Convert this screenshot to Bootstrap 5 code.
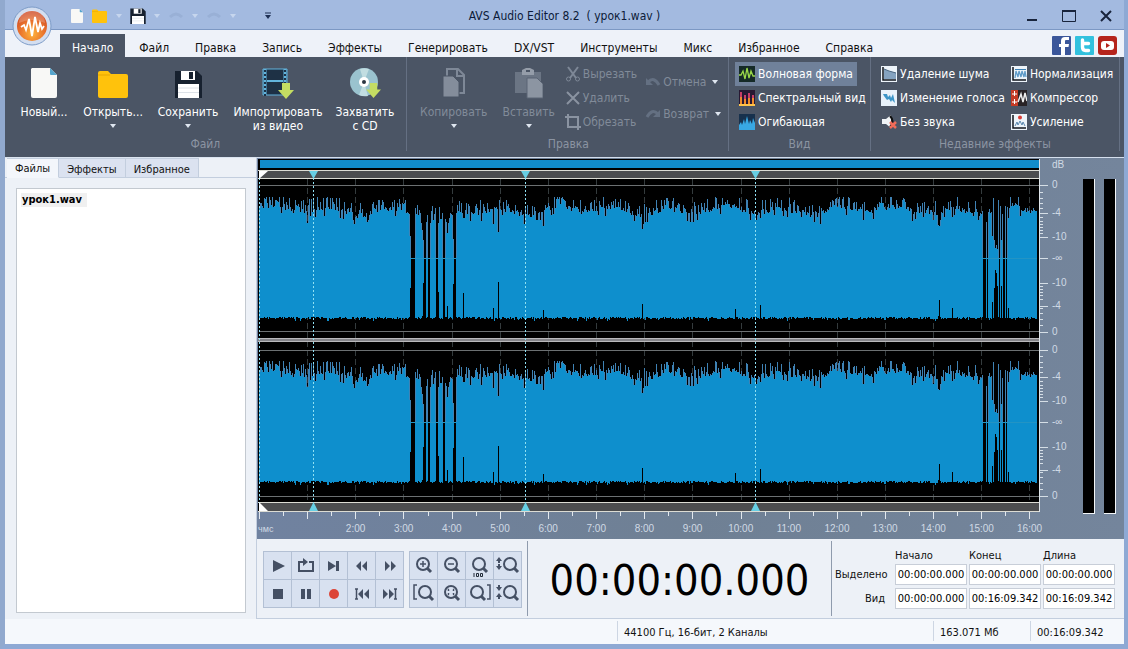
<!DOCTYPE html>
<html lang="ru">
<head>
<meta charset="utf-8">
<meta name="viewport" content="width=device-width, initial-scale=1">
<title>AVS Audio Editor 8.2 ( урок1.wav )</title>
<link href="https://cdn.jsdelivr.net/npm/bootstrap@5.3.0/dist/css/bootstrap.min.css" rel="stylesheet">
<style>
:root{--ui:"DejaVu Sans Condensed","Noto Sans",sans-serif;--ribbon:#4b5565;--frame:#a3bae0;--panel:#edf1f7;--line:#c3cede}
body{font-family:var(--ui);font-size:12px;line-height:14px;color:#111;background:var(--frame)}
button{font-family:inherit;color:inherit;background:none;border:0;padding:0}
svg{display:block;flex:none}
.app-window{min-height:100vh;border:solid #8ea9d4;border-width:0 4px 5px 5px;border-left-color:#91a9ce;background:var(--panel)}
.title-bar{height:30px;background:var(--frame);border-bottom:1px solid #7c98c4;padding:2px 8px 0;color:#0c1a38}
.title-bar .side{flex:1 1 0}
.orb{position:absolute;left:7px;top:6px}
.quick{gap:4px}
.quick button:first-child{margin-left:58px}
.menu-tabs{height:27px;padding:4px 7px 0 55px;background:#eef2f9}
.menu-tabs .nav-link{padding:7px 13px 0;height:23px;color:#111;border-radius:0;line-height:14px}
.menu-tabs .nav-link.active{background:var(--ribbon);color:#fff;padding:7px 12px 0;margin-right:1px}
.social{width:19px;height:19px;margin-top:2px}
.ribbon{height:100px;background:var(--ribbon);color:#fff}
.ribbon-group{border-right:1px solid #657083;margin-bottom:6px;flex:none}
.g-file{width:35.9%;padding-left:6px}.g-edit{width:28.8%;padding-left:8px}.g-view{width:12.7%;padding-left:6px}.g-fx{width:22.2%;padding-left:6px}
.group-name{color:#8b94a2;text-align:center;height:14px;padding-right:6px}
.group-body{height:80px;padding-top:5px}
.big-btn{height:75px;display:flex;flex-direction:column;align-items:center;line-height:14px;padding-top:5px}
.big-btn svg.pic{margin-bottom:6px}
.w-a{width:66px}.w-b{width:72px}.w-c{width:78px}.w-d{width:102px}
.off{color:#818b99}
.mini{height:24px;display:flex;align-items:center;gap:3px;white-space:nowrap;padding:0 4px}
.g-edit .mini{gap:2px}
.g-fx .mini{padding-right:2px}
.mini.on{background:#70819a}
.arrow-down{width:0;height:0;border:3px solid transparent;border-top:4px solid #dfe6f0;border-bottom:0}
.big-btn .arrow-down{margin-top:5px}
.quick .arrow-down{border-top-color:#c6d6ee}
.side-panel{width:252px;border-right:1px solid var(--line);background:var(--panel);border-top:1px solid #dbe4f0}
.side-tabs .nav-link{height:20px;padding:4px 8px 0;color:#111;border-radius:0;background:#dbe2f0;border:1px solid var(--line);border-left:0;line-height:14px;font-size:11px}
.side-tabs .nav-link.active{background:#f3f6fb;border-bottom-color:#f3f6fb;padding-top:3px}
.side-tabs{border-bottom:1px solid var(--line);padding-left:2px;height:20px}
.file-list{margin:10px 10px 6px 11px;background:#fff;border:1px solid #c3c9d0;padding:3px 4px}
.file-list a{display:inline-block;background:#f0f0f0;padding:0 5px 0 1px;font-weight:700;color:#000;text-decoration:none;font-size:11px;line-height:14px}
.stage{background:linear-gradient(90deg,#7082a0,#6f8094 50%,#74859c);border-top:1px solid #d5dfed;display:grid;grid-template-columns:minmax(0,1fr) 38px 46px;grid-template-rows:minmax(0,1fr) 27px;padding-left:1px}
.wave{width:100%;height:100%}
.wave-box{height:354px;min-height:100%}
.db-scale{display:grid;grid-template-columns:10px 1fr}
.db-scale ul,.clock-axis ul{list-style:none;margin:0;padding:0}
.db-scale li{display:flex;align-items:flex-end;line-height:0;height:0;min-height:0;padding-left:2px}
.axis-text{font-family:"Liberation Sans",sans-serif;font-size:10px;color:#d0dae5}
.meters{grid-column:3;grid-row:1/3;padding:21px 8px 25px 0;display:flex;gap:9px;justify-content:flex-end}
.meters div{width:12px;background:#000;border-right:1px solid #f3f6f8;border-bottom:1px solid #f3f6f8}
.clock-axis{grid-column:1}
.clock-axis .labels{display:flex;white-space:nowrap}
.clock-axis li{flex:0 0 6.157%;text-align:center;display:flex;justify-content:center}
.clock-axis li:first-child{flex-basis:9.4%;justify-content:flex-start;font-size:9px}
.bottom-panel{height:80px;background:var(--panel);border-bottom:1px solid var(--line)}
.tool-grid{display:grid;grid-auto-rows:28px;border:solid #b3c0d4;border-width:1px 0 0 1px;height:57px;margin-top:12px}
.tool-grid button{border:solid #b3c0d4;border-width:0 1px 1px 0;background:#d8e1f0;display:flex;align-items:center;justify-content:center}
.transport{grid-template-columns:repeat(5,28px);margin-left:6px}
.zooms{grid-template-columns:repeat(4,28px);margin:12px 5px 0}
.counter{flex:1 1 0;border:solid #8f9bad;border-width:0 1px;margin:2px 0 2px;font-size:43px;line-height:52px;padding-top:13px;text-align:center;color:#000}
.times{width:292px;padding:10px 9px 0 0;display:grid;grid-template-columns:58px 72px 72px 72px;column-gap:2px;row-gap:3px;justify-content:end;align-content:start;white-space:nowrap;font-size:11px}
.times span{height:12px}
.times .form-control{height:21px;padding:0;border-radius:0;border:1px solid #c8ced8;text-align:center;font:11px/14px var(--ui);color:#000;background:#fff}
.times label{text-align:right;padding:0 8px 0 0;align-self:center}
.status{height:25px;background:#f5f8fc;padding-right:2px;font-size:11px}
.status div{padding:5px 0 0 6px;border-left:1px solid #cdd6e3;height:20px;margin-top:2px;line-height:14px}
.status div:first-child{border:0;flex:1 1 0}
.s-format{width:316px}.s-size{width:97px}.s-length{width:92px}
</style>
</head>
<body>
<svg width="0" height="0" class="position-absolute" aria-hidden="true">
<defs>
<symbol id="floppy" viewBox="0 0 27 28"><path d="M0 1h22l5 5v22H0z" fill="#17212f"/><path d="M6 1h14v9H6z" fill="#fff"/><path d="M14 2h4v7h-4z" fill="#17212f"/><path d="M3 14h21v14H3z" fill="#fff"/><path d="M3 18h21M3 22.500h21" stroke="#dde2e8"/></symbol>
<symbol id="folder" viewBox="0 0 30 28"><path d="M0 3q0-2 2-2h8l3 3h15q2 0 2 2v20q0 2-2 2H2q-2 0-2-2z" fill="#ffc20c"/><path d="M0 5h12" stroke="#e6a700"/></symbol>
<symbol id="page" viewBox="0 0 26 30"><path d="M1 0h18l7 7v21q0 2-2 2H2q-2 0-2-2V1z" fill="#f8f8f6"/><path d="M19 0l7 7h-6q-1 0-1-1z" fill="#55a5cd"/></symbol>
<symbol id="lens" viewBox="0 0 20 20"><circle cx="9" cy="8" r="6" fill="none" stroke="#455064" stroke-width="2"/><path d="M13 12l4 4" stroke="#455064" stroke-width="3"/></symbol>
<symbol id="arrow-green" viewBox="0 0 16 16"><path d="M4 0h8v7h4l-8 9-8-9h4z" fill="#c4dd62"/></symbol>
</defs></svg>

<div class="app-window d-flex flex-column position-relative">
<header class="title-bar d-flex align-items-center">
  <svg class="orb" width="40" height="40" viewBox="0 0 40 40"><defs><radialGradient id="og" cx=".5" cy=".75" r=".7"><stop offset="0" stop-color="#ffb43c"/><stop offset=".6" stop-color="#e8702c"/><stop offset="1" stop-color="#cf4a22"/></radialGradient></defs><circle cx="20" cy="20" r="19" fill="#d3def0" stroke="#7d9cc8"/><circle cx="20" cy="20" r="15" fill="url(#og)"/><path d="M7 17a13 13 0 0 1 26 0q-13-6-26 0" fill="#fff" opacity=".22"/><path d="M9 21l3-2 2 5 3-11 3 17 3-19 3 15 2-9 2 6 2-3" fill="none" stroke="#fff" stroke-width="1.800"/></svg>
  <div class="side quick d-flex align-items-center">
    <button aria-label="Новый"><svg width="12" height="14"><use href="#page"/></svg></button>
    <button aria-label="Открыть" class="ms-1"><svg width="17" height="14" viewBox="0 0 17 14"><use href="#folder" width="17" height="14"/></svg></button><span class="arrow-down ms-1"></span>
    <button aria-label="Сохранить" class="ms-1"><svg width="16" height="16"><use href="#floppy"/></svg></button><span class="arrow-down ms-1"></span>
    <button aria-label="Отмена" class="ms-1"><svg width="16" height="12" viewBox="0 0 16 12"><path d="M2 7q6-6 12 0" fill="none" stroke="#99b0d6" stroke-width="3"/></svg></button><span class="arrow-down ms-1"></span>
    <button aria-label="Возврат" class="ms-1"><svg width="16" height="12" viewBox="0 0 16 12"><path d="M2 7q6-6 12 0" fill="none" stroke="#99b0d6" stroke-width="3"/></svg></button><span class="arrow-down ms-1"></span>
    <button aria-label="Настроить панель" class="ms-4"><svg width="8" height="8" viewBox="0 0 8 8"><path d="M1 1h6" stroke="#1f3155"/><path d="M1 3h6L4 7z" fill="#1f3155"/></svg></button>
  </div>
  <div>AVS Audio Editor 8.2&nbsp; ( урок1.wav )</div>
  <div class="side d-flex justify-content-end align-items-center gap-4">
    <button aria-label="Свернуть"><svg width="12" height="14" viewBox="0 0 12 14"><path d="M1 11h10" stroke="#18243c" stroke-width="2"/></svg></button>
    <button aria-label="Развернуть"><svg width="14" height="14" viewBox="0 0 14 14"><path d="M.5 1.500h13v11H.5z" fill="none" stroke="#18243c"/><path d="M0 2h14" stroke="#18243c" stroke-width="2"/></svg></button>
    <button aria-label="Закрыть" class="me-1"><svg width="12" height="12" viewBox="0 0 12 12"><path d="M1 1l10 10M11 1L1 11" stroke="#18243c" stroke-width="2"/></svg></button>
  </div>
</header>

<nav class="menu-tabs d-flex">
  <div class="nav flex-nowrap">
  <a class="nav-link active" href="#">Начало</a><a class="nav-link" href="#">Файл</a><a class="nav-link" href="#">Правка</a><a class="nav-link" href="#">Запись</a><a class="nav-link" href="#">Эффекты</a><a class="nav-link" href="#">Генерировать</a><a class="nav-link" href="#">DX/VST</a><a class="nav-link" href="#">Инструменты</a><a class="nav-link" href="#">Микс</a><a class="nav-link" href="#">Избранное</a><a class="nav-link" href="#">Справка</a>
  </div>
  <div class="ms-auto d-flex gap-1">
    <a href="#" aria-label="Facebook"><svg class="social" viewBox="0 0 19 19"><rect width="19" height="19" rx="1" fill="#3a569a"/><path d="M17 4h-3q-1 0-1 1v3h4l-.5 3H13v8h-4v-8H7V8h2V5q0-4 4-4h4z" fill="#fff"/></svg></a>
    <a href="#" aria-label="Twitter"><svg class="social" viewBox="0 0 19 19"><rect width="19" height="19" rx="1" fill="#32c1de"/><path d="M7.500 4v7q0 3.500 3 3.500h3M7.500 7.500h6" fill="none" stroke="#fff" stroke-width="3.400" stroke-linecap="round"/></svg></a>
    <a href="#" aria-label="YouTube"><svg class="social" viewBox="0 0 19 19"><rect width="19" height="19" rx="3" fill="#b5241c"/><rect x="3" y="5" width="13" height="9" rx="3" fill="#fff"/><path d="M8 7l4 2.500L8 12z" fill="#b5241c"/></svg></a>
  </div>
</nav>

<div class="ribbon d-flex">
  <section class="ribbon-group g-file">
    <div class="group-body d-flex">
      <button class="big-btn w-a"><svg class="pic" width="26" height="32" viewBox="0 0 26 32"><use href="#page" y="1" width="26" height="30"/></svg>Новый...</button>
      <button class="big-btn w-b"><svg class="pic" width="30" height="32" viewBox="0 0 30 32"><use href="#folder" y="3" width="30" height="28"/></svg>Открыть...<span class="arrow-down"></span></button>
      <button class="big-btn w-c"><svg class="pic" width="27" height="32" viewBox="0 0 27 32"><use href="#floppy" y="3" width="27" height="28"/></svg>Сохранить<span class="arrow-down"></span></button>
      <button class="big-btn w-d"><svg class="pic" width="32" height="32" viewBox="0 0 32 32"><path d="M1 2h24v26H1z" fill="#1e3145" stroke="#62b4dd" stroke-width="1"/><path d="M3 2v26M23 2v26" stroke="#62b4dd" stroke-width="3"/><path d="M3 3v26M23 3v26" stroke="#1e3145" stroke-width="2" stroke-dasharray="2 2"/><path d="M5 14h16" stroke="#62b4dd" stroke-width="2"/><use href="#arrow-green" x="16" y="16" width="16" height="16"/></svg>Импортировать<br>из видео</button>
      <button class="big-btn w-b"><svg class="pic" width="32" height="32" viewBox="0 0 32 32"><circle cx="15" cy="15" r="14" fill="#9ac3cf"/><path d="M15 15L11 2a14 14 0 0 1 9 0zM15 15l-5 13a14 14 0 0 0 9 1z" fill="#c1dde1"/><circle cx="15" cy="15" r="5" fill="#fff"/><circle cx="15" cy="15" r="2" fill="#2b3542"/><use href="#arrow-green" x="17" y="16" width="15" height="15"/></svg>Захватить<br>с CD</button>
    </div>
    <div class="group-name">Файл</div>
  </section>

  <section class="ribbon-group g-edit">
    <div class="group-body d-flex">
      <button class="big-btn w-c off"><svg class="pic" width="24" height="32" viewBox="0 0 24 32"><path d="M5 9V2h11l6 6v18h-5" fill="none" stroke="#7e8897" stroke-width="2"/><path d="M15 2v7h7" fill="none" stroke="#7e8897" stroke-width="2"/><path d="M1 9h10l6 6v15H1z" fill="#848d9b" stroke="#4b5565"/></svg>Копировать<span class="arrow-down"></span></button>
      <button class="big-btn w-b off"><svg class="pic" width="28" height="32" viewBox="0 0 28 32"><path d="M0 5h26v21H0z" fill="#6b7584"/><path d="M7 8V3l4-2h4l4 2v5z" fill="#959da9"/><path d="M11 3h4v2h-4z" fill="#4b5565"/><path d="M12 11h10l6 6v14H12z" fill="#8c95a2" stroke="#5a6474"/></svg>Вставить<span class="arrow-down"></span></button>
      <div class="off">
        <button class="mini px-0"><svg width="16" height="16" viewBox="0 0 16 16"><path d="M3 1l8 11M13 1L5 12" stroke="#7e8897" stroke-width="2"/><circle cx="3.500" cy="13" r="2" fill="none" stroke="#7e8897"/><circle cx="12.500" cy="13" r="2" fill="none" stroke="#7e8897"/></svg>Вырезать</button>
        <button class="mini px-0"><svg width="16" height="16" viewBox="0 0 16 16"><path d="M2 2l12 12M14 2L2 14" stroke="#8a93a1" stroke-width="2"/></svg>Удалить</button>
        <button class="mini px-0"><svg width="16" height="16" viewBox="0 0 16 16"><path d="M3 0v13h13M0 3h13v13" fill="none" stroke="#8a93a1" stroke-width="2"/></svg>Обрезать</button>
      </div>
      <div class="off ms-2 pt-2">
        <button class="mini px-0 mb-2"><svg width="16" height="12" viewBox="0 0 16 12"><path d="M3 6q6-6 11 3" fill="none" stroke="#647082" stroke-width="3"/><path d="M1 2v7h7z" fill="#647082"/></svg>Отмена<span class="arrow-down ms-1"></span></button>
        <button class="mini px-0"><svg width="16" height="12" viewBox="0 0 16 12"><path d="M2 9q5-9 11-3" fill="none" stroke="#647082" stroke-width="3"/><path d="M15 2v7H8z" fill="#647082"/></svg>Возврат<span class="arrow-down ms-1"></span></button>
      </div>
    </div>
    <div class="group-name">Правка</div>
  </section>

  <section class="ribbon-group g-view">
    <div class="group-body">
      <button class="mini on"><svg width="16" height="16" viewBox="0 0 16 16"><path d="M0 0h16v16H0z" fill="#152a27"/><path d="M0 9h2l2-4 2 8 2-11 2 10 2-7 2 5h2" fill="none" stroke="#9ad84a" stroke-width="1.300"/></svg>Волновая форма</button>
      <button class="mini"><svg width="16" height="16" viewBox="0 0 16 16"><path d="M0 0h16v16H0z" fill="#281933"/><path d="M1 2h2v13H1zM5 5h2v10H5zM9 3h2v12H9zM13 5h2v10h-2z" fill="#c83d68"/><path d="M1 7h2v8H1zM5 9h2v6H5zM9 8h2v7H9zM13 8h2v7h-2z" fill="#f08a2c"/><path d="M0 14h16v2H0z" fill="#ffc34a"/></svg>Спектральный вид</button>
      <button class="mini"><svg width="16" height="16" viewBox="0 0 16 16"><path d="M0 0h16v16H0z" fill="#17314d"/><path d="M0 16v-5l2-3 1 3 2-6 1 5 2-8 2 8 1-4 2 4 1-6 2 5v7z" fill="#38a8e4"/></svg>Огибающая</button>
    </div>
    <div class="group-name">Вид</div>
  </section>

  <section class="ribbon-group g-fx">
    <div class="group-body d-flex">
      <div>
        <button class="mini"><svg width="16" height="16" viewBox="0 0 16 16"><path d="M0 0h16v16H0z" fill="#edf4fa"/><path d="M3 3l5 2 7 2v6H3z" fill="#85a3c0"/><path d="M3 3l5 2 7 2" fill="none" stroke="#49657f"/><path d="M2 1v13h13" fill="none" stroke="#10151c" stroke-width="1.500"/></svg>Удаление шума</button>
        <button class="mini"><svg width="16" height="16" viewBox="0 0 16 16"><path d="M0 0h16v16H0z" fill="#e8f2fb"/><path d="M2 4h4l1 3 2-2 1 3 2-4 2 9-3-3-1 2-2-3-2 1-3-4z" fill="#3c95c8"/></svg>Изменение голоса</button>
        <button class="mini"><svg width="16" height="16" viewBox="0 0 16 16"><path d="M1 5h4l5-4v13l-5-4H1z" fill="#f0f3f6"/><path d="M9 2q5 5 0 11" fill="none" stroke="#111" stroke-width="2"/><path d="M9 8l6 6M15 8l-6 6" stroke="#f06b58" stroke-width="2.500"/></svg>Без звука</button>
      </div>
      <div>
        <button class="mini"><svg width="16" height="16" viewBox="0 0 16 16"><path d="M0 0h16v16H0z" fill="#edf4fa"/><path d="M4 3.500h11" stroke="#3b80b4"/><path d="M4 12l1-7 2 6 1-6 2 6 1-6 2 6 1-6 1 6" fill="none" stroke="#5f9cc9" stroke-width="1.300"/><path d="M2 1v13h13" fill="none" stroke="#10151c" stroke-width="1.500"/></svg>Нормализация</button>
        <button class="mini"><svg width="16" height="16" viewBox="0 0 16 16"><path d="M0 0h7v16H0z" fill="#c43a25"/><path d="M7 0h9v16H7z" fill="#292326"/><path d="M3.500 1v5M1 4h5M3.500 9v5M1 12h5" stroke="#fff"/><path d="M7 12l3-8 2 8 2-9 2 8" fill="none" stroke="#eee" stroke-width="1.500"/></svg>Компрессор</button>
        <button class="mini"><svg width="16" height="16" viewBox="0 0 16 16"><path d="M0 0h16v16H0z" fill="#edf4fa"/><path d="M4 12l2-4 1 3 2-4 2 4 1-3 2 4" fill="none" stroke="#5a87ae"/><circle cx="9" cy="3.500" r="2" fill="#d93d37"/><path d="M2 1v13h13" fill="none" stroke="#10151c" stroke-width="1.500"/></svg>Усиление</button>
      </div>
    </div>
    <div class="group-name">Недавние эффекты</div>
  </section>
</div>

<main class="d-flex flex-grow-1">
  <aside class="side-panel d-flex flex-column flex-shrink-0">
    <div class="nav side-tabs flex-nowrap"><a class="nav-link active" href="#">Файлы</a><a class="nav-link" href="#">Эффекты</a><a class="nav-link" href="#">Избранное</a></div>
    <div class="file-list flex-grow-1"><a href="#">урок1.wav</a></div>
  </aside>
  <div class="d-flex flex-column flex-fill overflow-hidden">
    <div class="stage flex-grow-1">
      <div class="wave-box"><svg class="wave" id="wave" viewBox="0 0 782 354" preserveAspectRatio="none" shape-rendering="crispEdges"></svg></div>
      <div class="db-scale"><svg id="dbTicks" width="10" height="100%" viewBox="0 0 10 354" preserveAspectRatio="none" shape-rendering="crispEdges"></svg><ul id="dbLabels" class="axis-text d-flex flex-column"></ul></div>
      <div class="meters"><div></div><div></div></div>
      <div class="clock-axis"><svg id="clockTicks" width="100%" height="10" viewBox="0 0 782 10" preserveAspectRatio="none" shape-rendering="crispEdges"></svg><ul id="clockLabels" class="labels axis-text"></ul></div>
    </div>
    <div class="bottom-panel d-flex">
      <div class="tool-grid transport">
        <button aria-label="Воспроизвести"><svg width="16" height="16" viewBox="0 0 16 16"><path d="M3 2l12 6-12 6z" fill="#455064"/></svg></button>
        <button aria-label="Повтор"><svg width="18" height="16" viewBox="0 0 18 16"><path d="M5 4H2v9h14V4h-4" fill="none" stroke="#455064" stroke-width="2"/><path d="M4 4h5" stroke="#455064" stroke-width="2"/><path d="M6 0l5 4-5 4z" fill="#455064"/></svg></button>
        <button aria-label="До конца"><svg width="14" height="16" viewBox="0 0 14 16"><path d="M1 3l8 5-8 5zM9 3h3v10H9z" fill="#455064"/></svg></button>
        <button aria-label="Назад"><svg width="14" height="16" viewBox="0 0 14 16"><path d="M6 3v10L1 8zM12 3v10L7 8z" fill="#455064"/></svg></button>
        <button aria-label="Вперёд"><svg width="14" height="16" viewBox="0 0 14 16"><path d="M2 3v10l5-5zM8 3v10l5-5z" fill="#455064"/></svg></button>
        <button aria-label="Стоп"><svg width="10" height="10"><path d="M0 0h10v10H0z" fill="#455064"/></svg></button>
        <button aria-label="Пауза"><svg width="10" height="10"><path d="M0 0h4v10H0zM6 0h4v10H6z" fill="#455064"/></svg></button>
        <button aria-label="Запись"><svg width="10" height="10"><circle cx="5" cy="5" r="5" fill="#dc4537"/></svg></button>
        <button aria-label="В начало"><svg width="16" height="12" viewBox="0 0 16 12"><path d="M1 1h3M2.500 1v10M1 11h3" stroke="#455064" stroke-width="1.500"/><path d="M9 1v10L4 6zM15 1v10l-5-5z" fill="#455064"/></svg></button>
        <button aria-label="В конец"><svg width="16" height="12" viewBox="0 0 16 12"><path d="M15 1h-3M13.500 1v10M15 11h-3" stroke="#455064" stroke-width="1.500"/><path d="M1 1v10l5-5zM7 1v10l5-5z" fill="#455064"/></svg></button>
      </div>
      <div class="tool-grid zooms">
        <button aria-label="Увеличить"><svg width="20" height="20" viewBox="0 0 20 20"><use href="#lens"/><path d="M6 8h6M9 5v6" stroke="#455064" stroke-width="1.500"/></svg></button>
        <button aria-label="Уменьшить"><svg width="20" height="20" viewBox="0 0 20 20"><use href="#lens"/><path d="M6 8h6" stroke="#455064" stroke-width="1.500"/></svg></button>
        <button aria-label="Масштаб 100"><svg width="22" height="24" viewBox="0 0 22 24"><use href="#lens" x="1" y="2" width="20" height="20"/><path d="M5 19v4M7.500 19.500h2v3h-2zM11.500 19.500h2v3h-2z" fill="none" stroke="#222b38"/></svg></button>
        <button aria-label="Увеличить по вертикали"><svg width="26" height="20" viewBox="0 0 26 20"><path d="M4 1L1 5h2v2h2V5h2zM4 14l-3-4h2V8h2v2h2z" fill="#455064"/><use href="#lens" x="6" width="20" height="20"/></svg></button>
        <button aria-label="К началу выделения"><svg width="24" height="20" viewBox="0 0 24 20"><path d="M5 1H2v14h3" fill="none" stroke="#455064" stroke-width="1.500"/><use href="#lens" x="4" width="20" height="20"/></svg></button>
        <button aria-label="Весь файл"><svg width="20" height="20" viewBox="0 0 20 20"><use href="#lens"/><path d="M7 5.500H6.500V7M11 5.500h.5V7M7 10.500h-.5V9M11 10.500h.5V9" fill="none" stroke="#455064" stroke-width="1.500"/></svg></button>
        <button aria-label="К концу выделения"><svg width="24" height="20" viewBox="0 0 24 20"><path d="M19 1h3v14h-3" fill="none" stroke="#455064" stroke-width="1.500"/><use href="#lens" x="0" width="20" height="20"/></svg></button>
        <button aria-label="Уменьшить по вертикали"><svg width="26" height="20" viewBox="0 0 26 20"><path d="M4 7L1 3h2V1h2v2h2zM4 9l-3 4h2v2h2v-2h2z" fill="#455064"/><use href="#lens" x="6" width="20" height="20"/></svg></button>
      </div>
      <div class="counter">00:00:00.000</div>
      <div class="times">
        <span></span><span>Начало</span><span>Конец</span><span>Длина</span>
        <label for="s1">Выделено</label><input class="form-control" id="s1" value="00:00:00.000"><input class="form-control" aria-label="Конец выделения" value="00:00:00.000"><input class="form-control" aria-label="Длина выделения" value="00:00:00.000">
        <label for="v1">Вид</label><input class="form-control" id="v1" value="00:00:00.000"><input class="form-control" aria-label="Конец вида" value="00:16:09.342"><input class="form-control" aria-label="Длина вида" value="00:16:09.342">
      </div>
    </div>
  </div>
</main>
<footer class="status d-flex">
  <div></div><div class="s-format">44100 Гц, 16-бит, 2 Каналы</div><div class="s-size">163.071 Мб</div><div class="s-length">00:16:09.342</div>
</footer>
</div>

<script src="https://cdn.jsdelivr.net/npm/bootstrap@5.3.0/dist/js/bootstrap.bundle.min.js"></script>
<script>
// Peak heights of one channel, measured from its centre line.
let seed = 7;
const rnd = () => (seed = (seed * 16807) % 2147483647) / 2147483647;
const N = 778, up = [], down = [];
for (let i = 0; i < N; i++) {
  const swell = 3 * Math.sin(i / 9) + 2 * Math.sin(i / 23);
  const r = rnd(), q = rnd();
  up.push(Math.min(61, Math.round(45 + swell + (r < .5 ? q * 5 : r < .94 ? 3 + q * 12 : -3 - q * 4))));
  down.push(Math.round(59 + rnd() * 2 + (rnd() > .95 ? 2 : 0)));
}
const dip = (x, t, b, w = 1) => { for (let k = 0; k < w; k++) { up[x + k] = Math.min(up[x + k], t); down[x + k] = Math.min(down[x + k], b); } };
for (let x = 156; x < 198; x++) up[x] = 34 + Math.round(rnd() * 20);
[[48,35,60],[108,36,60],[151,22,30],[152,0,0,4],[163,28,58],[164,18,25],[165,0,0,2],[169,0,0,2],[177,0,0,2],[179,35,34],[184,0,0,2],[188,25,48],[194,19,26],[195,0,0,2],[204,40,35],
 [234,34,50],[239,26,24],[284,32,52],[383,29,46],[476,60,51],[501,40,47],[561,34,60],[679,33,58],[680,32,42],[681,38,60],[693,50,50],
 [724,0,0,3],[728,0,0,1],[733,22,44],[735,18,30],[736,10,12],[737,13,15],[738,9,28],[740,0,0,1],[742,18,28],[744,0,0,2],[747,0,0,1],[749,40,50]].forEach(d => dip(...d));
const outline = (a, b, cy) => {
  let p = `M1 ${cy}`;
  a.forEach((v, i) => p += `V${cy - v}H${i + 2}`);
  for (let i = N - 1; i >= 0; i--) p += `V${cy + b[i]}H${i + 1}`;
  return p + 'Z';
};
const body = up.map((v, i) => Math.min(v, up[i - 1] ?? v, up[i + 1] ?? v));
const channel = cy => `<path fill="#3f82b4" d="${outline(up, down, cy)}"/><path fill="#0e8fcd" d="${outline(body, down, cy)}"/><path d="M152 ${cy}h46M724 ${cy}h55" stroke="#2394c4"/>`;
const guides = [];
for (let m = 1; m <= 16; m++) guides.push(Math.round(1 + m * 48.15));
const dashes = guides.map(x => `M${x}.5 21V344`).join('');
const marks = [55, 267, 497];
document.getElementById('wave').innerHTML =
  `<path fill="#000" d="M0 1h782v353H0z"/><path fill="#118ccb" d="M2 2h780v8H2z"/>
   <path fill="#4c4d4f" d="M1 12h781v8H1zM1 345h781v8H1z"/>
   <path d="M0 12.500h782M0 20.500h782M0 344.500h782M0 353.500h782" stroke="#dcdcd4"/>
   <path d="${dashes}" stroke="#343b3d" stroke-dasharray="6 3"/>
   ${channel(100)}${channel(264)}
   <path d="M1 27.500h781M1 173.500h781M1 192.500h781M1 338.500h781" stroke="#6c7072"/>
   <path d="M0 180h782v4H0z" fill="#85858a"/><path d="M0 180.500h782M0 183.500h782" stroke="#b9b9bc"/>
   <path d="M1.500 20V345${marks.map(x => `M${x}.5 20V345`).join('')}" stroke="#8fe0f2" stroke-dasharray="2 2"/>
   <path d="M1 13h9l-9 8zM1 353h9l-9-9z" fill="#fff" shape-rendering="auto"/>
   <path d="${marks.map(x => `M${x - 4} 13h9l-4 7h-1zM${x - 4} 353h9l-4-8h-1z`).join('')}" fill="#67cfe4" shape-rendering="auto"/>
   <path d="M781.500 1v353" stroke="#dfe5ea"/>`;

// Decibel scale: major ticks carry labels, minor ticks lie between them.
const db = [[7,'dB'],[27,'0'],[55,'-4'],[79,'-10'],[100,'-∞'],[125,'-10'],[148,'-4'],[174,'0'],[192,'0'],[219,'-4'],[243,'-10'],[264,'-∞'],[289,'-10'],[312,'-4'],[338,'0']];
let last = 0;
document.getElementById('dbLabels').innerHTML = db.map(([y, t]) => { const h = y - last; last = y; return `<li style="flex:${h} 1 0">${t}</li>`; }).join('') + '<li style="flex:16 1 0"></li>';
let ticks = '';
db.slice(1).forEach(([y]) => ticks += `M0 ${y}.5h8`);
[27, 191].forEach(o => [7,13,18,23,32,36,39,42,45,48,98,101,104,107,110,114,123,128,134,140].forEach(d => ticks += `M0 ${o + d}.5h3`));
document.getElementById('dbTicks').innerHTML = `<path d="${ticks}" stroke="#d5dee6"/>`;

// Time axis in minutes
let t = '';
for (let m = 0; m <= 32; m++) t += `M${Math.round(1 + m * 24.075)}.5 0v${m % 2 ? 4 : 7}`;
document.getElementById('clockTicks').innerHTML = `<path d="${t}" stroke="#e2e8ee"/>`;
document.getElementById('clockLabels').innerHTML = '<li>чмс</li>' + Array.from({length: 15}, (_, i) => `<li>${i + 2}:00</li>`).join('');
</script>
</body>
</html>
